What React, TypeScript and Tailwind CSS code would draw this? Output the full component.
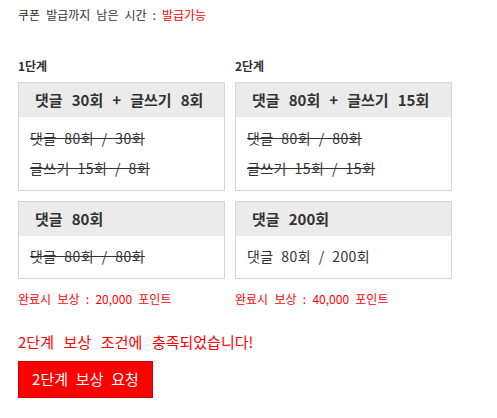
export default function App() {
  const Box = ({ title, lines, first }: { title: string; lines: { text: string; done: boolean }[]; first?: boolean }) => (
    <div className={`border border-[#d5d5d5] bg-white ${first ? "" : "mt-[10px]"}`}>
      <div className="h-[34px] bg-[#ebebeb] flex items-center pl-[16px] text-[15px] font-bold text-[#333] [word-spacing:0.38em]">{title}</div>
      <div className={`px-[11px] ${lines.length > 1 ? "pt-[6px]" : "pt-[5px]"} pb-[7px] text-[14px] leading-[30px] text-[#333] tracking-[0.4px] [word-spacing:0.3em]`}>
        {lines.map((l, i) => (
          <div key={i} className={l.done ? "line-through" : ""}>{l.text}</div>
        ))}
      </div>
    </div>
  );

  return (
    <div className="w-[497px] h-[418px] bg-white px-[18px] text-[#333] font-['Noto_Sans_CJK_KR','Noto_Sans',sans-serif]">
      <div className="pt-[6px] text-[12px] leading-[18px] [word-spacing:0.28em]">
        쿠폰 발급까지 남은 시간 : <span className="text-[#ff0000]">발급가능</span>
      </div>
      <div className="mt-[34px] grid grid-cols-[207px_217px] gap-x-[10px]">
        <div className="flex flex-col">
          <div className="text-[12px] leading-[16px] font-bold">1단계</div>
          <div className="mt-[8px]">
            <Box
              first
              title="댓글 30회 + 글쓰기 8회"
              lines={[
                { text: "댓글 80회 / 30회", done: true },
                { text: "글쓰기 15회 / 8회", done: true },
              ]}
            />
            <Box title="댓글 80회" lines={[{ text: "댓글 80회 / 80회", done: true }]} />
          </div>
          <div className="mt-[11px] text-[12px] leading-[18px] text-[#ff0000] [word-spacing:0.3em]">완료시 보상 : 20,000 포인트</div>
        </div>
        <div className="flex flex-col">
          <div className="text-[12px] leading-[16px] font-bold">2단계</div>
          <div className="mt-[8px]">
            <Box
              first
              title="댓글 80회 + 글쓰기 15회"
              lines={[
                { text: "댓글 80회 / 80회", done: true },
                { text: "글쓰기 15회 / 15회", done: true },
              ]}
            />
            <Box title="댓글 200회" lines={[{ text: "댓글 80회 / 200회", done: false }]} />
          </div>
          <div className="mt-[11px] text-[12px] leading-[18px] text-[#ff0000] [word-spacing:0.3em]">완료시 보상 : 40,000 포인트</div>
        </div>
      </div>
      <div className="mt-[24px] text-[15px] leading-[20px] text-[#ff0000] [word-spacing:0.42em]">2단계 보상 조건에 충족되었습니다!</div>
      <button className="mt-[9px] w-[135px] h-[37px] bg-[#ff0000] border border-[#cc0000] text-white text-[15px] [word-spacing:0.3em] flex items-center justify-center">
        2단계 보상 요청
      </button>
    </div>
  );
}
